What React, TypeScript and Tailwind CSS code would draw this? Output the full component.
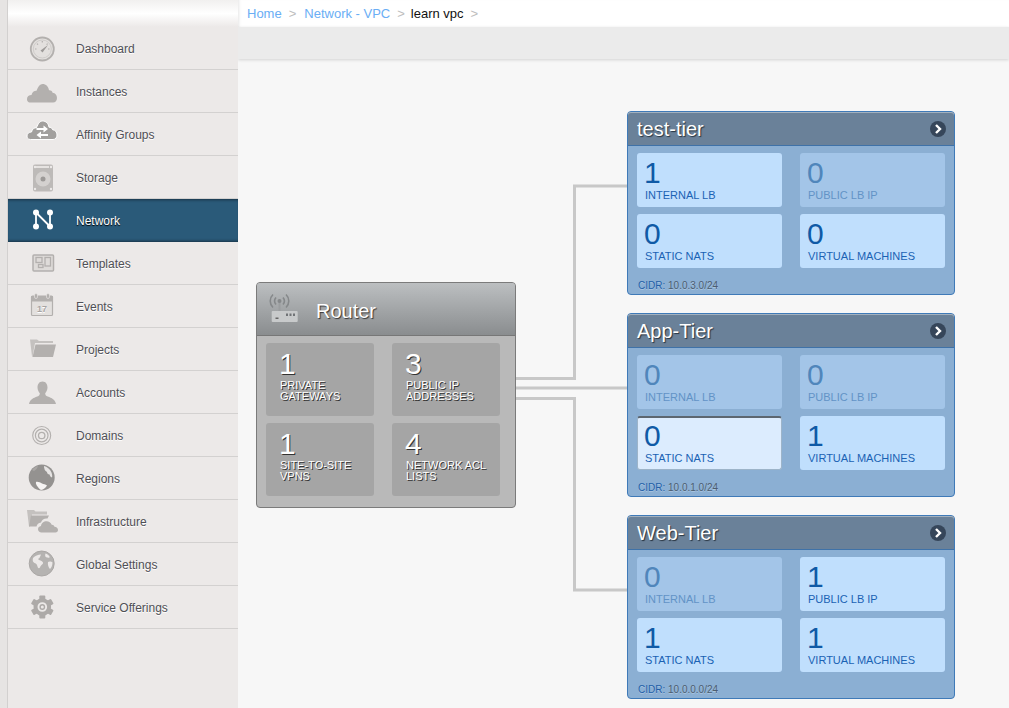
import type { ReactNode } from "react";

const G = "#b3b0ae";

function Svg({ children }: { children: ReactNode }) {
  return (
    <svg viewBox="0 0 36 36" className="h-9 w-9 shrink-0">
      {children}
    </svg>
  );
}

function DashboardIcon() {
  return (
    <Svg>
      <circle cx="18.3" cy="18" r="11.5" fill="#e3e0de" stroke={G} strokeWidth="1.8" />
      <circle cx="18.3" cy="18" r="9" fill="none" stroke="#cfccca" strokeWidth="1" />
      <path d="M18.3 10v1.5M11 18h1.5M24 18h1.5M13 12.7l1 1M23.6 12.7l-1 1" stroke={G} strokeWidth="1.2" />
      <path d="M16.5 19.5L24 14l-5.5 7.5z" fill="#9d9a98" />
    </Svg>
  );
}

const cloud =
  "M6.5 28.5C3.5 28.5 3 26.5 3 25c0-2.5 2-4 4.5-4 .5-3 3-4.5 5-4.3C14 12.5 16 10 18.5 10c3.5 0 6 2.5 6.5 6.3 1-.3 3 .2 3.6 2.4 2.8.4 4.4 2.5 4.4 5.3 0 2.5-1.5 4.5-4 4.5z";

function CloudIcon() {
  return (
    <Svg>
      <path d={cloud} fill={G} />
    </Svg>
  );
}

function AffinityIcon() {
  return (
    <Svg>
      <path d={cloud} transform="translate(0 -6)" fill="#a2a09e" stroke="#fff" strokeWidth="1" />
      <path d="M12.5 11h7V8.5l4.5 3.5-4.500 3.500V13h-7zM24 17h-7v-2.500L12.500 18l4.500 3.500V19h7z" fill="#fff" />
    </Svg>
  );
}

function StorageIcon() {
  return (
    <Svg>
      <rect x="9" y="4.5" width="20" height="27" rx="2" fill="#bdbab8" />
      <rect x="12" y="6" width="13" height="2" fill="#e6e3e1" />
      <circle cx="19" cy="19" r="7.5" fill="#d4d1cf" />
      <circle cx="19" cy="19" r="2.5" fill="#9c9997" />
      <circle cx="11" cy="29" r="1.2" fill="#ece9e8" />
      <circle cx="27" cy="29" r="1.2" fill="#ece9e8" />
      <circle cx="27" cy="7" r="1.2" fill="#ece9e8" />
      <circle cx="11" cy="7" r="1.2" fill="#ece9e8" />
    </Svg>
  );
}

function NetworkIcon() {
  return (
    <Svg>
      <path d="M12 9.5v14M12 9.5l14 14M26 9.5v14" stroke="#fff" strokeWidth="1.8" fill="none" />
      <circle cx="12" cy="9.5" r="3" fill="#fff" />
      <circle cx="26" cy="9.5" r="3" fill="#fff" />
      <circle cx="12" cy="23.5" r="3" fill="#fff" />
      <circle cx="26" cy="23.5" r="3" fill="#fff" />
    </Svg>
  );
}

function TemplatesIcon() {
  return (
    <Svg>
      <rect x="9" y="9" width="20.5" height="16" rx="1" fill="#dedbd9" stroke={G} strokeWidth="1.5" />
      <rect x="12" y="11.5" width="6" height="5" fill="none" stroke={G} strokeWidth="1.3" />
      <rect x="21" y="11.5" width="5.5" height="8.5" fill="none" stroke={G} strokeWidth="1.3" />
      <rect x="14.5" y="18.5" width="4.5" height="3" fill="none" stroke={G} strokeWidth="1.3" />
    </Svg>
  );
}

function EventsIcon() {
  return (
    <Svg>
      <rect x="7.5" y="7" width="21" height="19.5" rx="1" fill="#e3e0de" stroke={G} strokeWidth="1.2" />
      <rect x="7" y="7" width="22" height="5.5" fill={G} />
      <rect x="10.5" y="4.5" width="3" height="5" rx="1.5" fill={G} stroke="#ece9e8" strokeWidth="0.6" />
      <rect x="22.5" y="4.5" width="3" height="5" rx="1.5" fill={G} stroke="#ece9e8" strokeWidth="0.6" />
      <text x="18" y="23" textAnchor="middle" fontSize="9" fontWeight="700" fill="#a8a5a3" fontFamily="Liberation Sans, sans-serif">
        17
      </text>
    </Svg>
  );
}

function ProjectsIcon() {
  return (
    <Svg>
      <path d="M6 7.5h7l2 1.5h14v2H11L8.500 24.500H8z" fill="#c4c1bf" />
      <path d="M11.5 12.5H32l-3 12.500H8.500z" fill={G} />
    </Svg>
  );
}

function AccountsIcon() {
  return (
    <Svg>
      <path
        d="M19.5 6.5c3.500 0 5 3 5 6 0 2.500-1.200 4.500-2.300 5.800 0 1.700.6 2.500 2.500 3.200 4 1.500 7.500 3 8.300 7.500H6c.8-4.500 4.300-6 8.300-7.500 1.900-.7 2.500-1.500 2.500-3.200-1.100-1.300-2.300-3.300-2.300-5.800 0-3 1.500-6 5-6z"
        fill={G}
        transform="translate(-1 0)"
      />
    </Svg>
  );
}

function DomainsIcon() {
  return (
    <Svg>
      <circle cx="17.7" cy="17.5" r="9" fill="none" stroke={G} strokeWidth="1.1" />
      <circle cx="17.7" cy="17.5" r="6.3" fill="none" stroke={G} strokeWidth="1.2" />
      <circle cx="17.7" cy="17.5" r="3.2" fill="none" stroke={G} strokeWidth="1.3" />
    </Svg>
  );
}

function RegionsIcon() {
  return (
    <Svg>
      <circle cx="17.7" cy="16.5" r="13" fill="#949290" />
      <path d="M20 5c3 .5 6 3 7.500 6.500.5 1.500 1 3.500.5 5-1.500-.5-2-1.500-2.500-3-1.500 0-2.500-1-2.500-2.500-1.500-1-2.500-2-2.500-3-.5-1-.5-2-.5-3z" fill="#e6e4e3" />
      <path d="M12 21c2-.5 4 .5 6 1.500 1.500.5 3.500 1 5 2-1.500 2.500-3.500 4-6 4.500-1.500-1-2.500-2-3.500-3.500-1-1.500-2-3-1.500-4.500z" fill="#f6f4f3" />
      <path d="M8 9c1.500-2 4-3.500 6-4-.5 2-2 4-4 5z" fill="#a9a6a4" />
    </Svg>
  );
}

function InfrastructureIcon() {
  return (
    <Svg>
      <path d="M3 6h7l1.500 1.500H23v3H8l-2 12H5z" fill="#c4c1bf" />
      <path d="M7 11.5h18l-1.500 3c-3-.5-5.500 1-6.500 4-2.500.3-4 1.800-4.500 4H5z" fill={G} />
      <path
        d="M17.5 28.5c-2 0-3.500-1.300-3.500-3.200 0-1.800 1.200-3 3-3.300.3-2.800 2.800-4.800 5.500-4.800 2.500 0 4.300 1.300 5.200 3.500 1-.2 2.500.5 2.800 2 2 .3 3.500 1.300 3.500 3.300 0 1.400-1 2.500-2.500 2.500z"
        fill={G}
      />
    </Svg>
  );
}

function GlobalIcon() {
  return (
    <Svg>
      <circle cx="17.7" cy="16.5" r="12.5" fill="#b5b3b1" stroke="#aaa7a5" strokeWidth="1" />
      <path d="M9 11c2-2 5-3.500 8-3.500-1 2-1 3.500-3 4.500 1 1.500 4 1.500 5 3.500.5 2-2.500 2.500-3 5-1 1-2 1-2.500-1-.5-2-1-3-3-3.500-2-1-2-3-1.500-5z" fill="#ece9e8" />
      <path d="M21.5 6.500c2 .5 3 1.500 4 3 .5 1.500-1 1.500-2 1-1.500 0-3-1-2-4z" fill="#ece9e8" />
      <path d="M24 15c1.500-1 3.500-.5 4.500.5 0 2.500-1 5-2.500 6.500-1.500-1.500-2.500-4.500-2-7z" fill="#ece9e8" />
    </Svg>
  );
}

function GearIcon() {
  return (
    <Svg>
      <g transform="translate(18.3 17)">
        {[0, 60, 120, 180, 240, 300].map((a) => (
          <rect key={a} x="-3" y="-11.5" width="6" height="6" rx="1" fill="#adaaa8" transform={`rotate(${a})`} />
        ))}
        <circle r="6.8" fill="none" stroke="#adaaa8" strokeWidth="4" />
        <circle r="2.2" fill="none" stroke="#adaaa8" strokeWidth="1.4" />
      </g>
    </Svg>
  );
}

const navItems = [
  { label: "Dashboard", icon: <DashboardIcon /> },
  { label: "Instances", icon: <CloudIcon /> },
  { label: "Affinity Groups", icon: <AffinityIcon /> },
  { label: "Storage", icon: <StorageIcon /> },
  { label: "Network", icon: <NetworkIcon />, active: true },
  { label: "Templates", icon: <TemplatesIcon /> },
  { label: "Events", icon: <EventsIcon /> },
  { label: "Projects", icon: <ProjectsIcon /> },
  { label: "Accounts", icon: <AccountsIcon /> },
  { label: "Domains", icon: <DomainsIcon /> },
  { label: "Regions", icon: <RegionsIcon /> },
  { label: "Infrastructure", icon: <InfrastructureIcon /> },
  { label: "Global Settings", icon: <GlobalIcon /> },
  { label: "Service Offerings", icon: <GearIcon /> },
];

function Sidebar() {
  return (
    <aside className="z-10 w-[238px] shrink-0 bg-[#e6e4e3] pl-[7px]">
      <div className="h-full border-l border-[#d2d0cf] bg-[#ece9e8]">
        <div className="h-[27px] bg-gradient-to-b from-[#f1f0ef] via-[#ffffff] to-[#ece9e8]" />
        {navItems.map((item) =>
          item.active ? (
            <div
              key={item.label}
              className="flex h-[43px] items-center gap-4 bg-[#2a5a79] pl-4 text-xs text-white shadow-[inset_0_3px_3px_-2px_rgba(0,0,0,0.45),inset_0_-3px_3px_-2px_rgba(0,0,0,0.45)] [text-shadow:0_1px_1px_#000]"
            >
              {item.icon}
              <span>{item.label}</span>
            </div>
          ) : (
            <div
              key={item.label}
              className="flex h-[43px] items-center gap-4 border-b border-[#d3d1d0] pl-4 pt-px text-xs text-[#4f4f55] [text-shadow:0_1px_0_#fff]"
            >
              {item.icon}
              <span>{item.label}</span>
            </div>
          ),
        )}
      </div>
    </aside>
  );
}

function Breadcrumb() {
  return (
    <div className="flex h-[27px] items-center bg-white pl-[9px] text-[13px] shadow-[inset_3px_0_3px_-2px_rgba(0,0,0,0.1)]">
      <span className="mr-[7px] text-[#6aaef5]">Home</span>
      <span className="mr-2 text-[#bdbdbd]">&gt;</span>
      <span className="mr-[7px] text-[#6aaef5]">Network - VPC</span>
      <span className="mr-1.5 text-[#bdbdbd]">&gt;</span>
      <span className="mr-[7px] text-[#111]">learn vpc</span>
      <span className="text-[#bdbdbd]">&gt;</span>
    </div>
  );
}

function RouterIcon() {
  return (
    <svg viewBox="0 0 30 34" className="h-[34px] w-[30px] shrink-0">
      <path d="M11.5 9v10" stroke="#9a9d9f" strokeWidth="2" />
      <path d="M5 15.5a9 9 0 0 1 0-13M18 15.5a9 9 0 0 0 0-13M8 12.5a5.5 5.5 0 0 1 0-7M15 12.5a5.5 5.5 0 0 0 0-7" fill="none" stroke="#85888a" strokeWidth="1.6" />
      <circle cx="11.5" cy="9" r="2" fill="#85888a" />
      <rect x="3.7" y="19" width="26" height="11" rx="1" fill="#c8cacb" />
      <rect x="7.5" y="25.5" width="3" height="1.5" fill="#666" />
      <path d="M18 21.5h2V24h-2zM21.5 21.5h2V24h-2zM25 21.5h2V24h-2z" fill="#707376" />
    </svg>
  );
}

function RouterStat({ n, lines }: { n: number; lines: [string, string] }) {
  return (
    <div className="h-[73px] rounded-[3px] bg-[#a5a5a5] pl-[13px] pt-[6px] text-white [text-shadow:1px_1px_0_#333]">
      <div className="text-[30px] leading-[30px]">{n}</div>
      <div className="mt-px pl-px text-[11px] leading-[11px]">
        {lines[0]}
        <br />
        {lines[1]}
      </div>
    </div>
  );
}

function Router() {
  return (
    <div className="h-[226px] w-[260px] shrink-0 rounded-[4px] border border-[#7b7b7b] bg-[#b9b9b9]">
      <div className="flex h-[53px] items-center gap-[18px] rounded-t-[3px] border-b border-[#777] bg-gradient-to-b from-[#bcbfc1] to-[#8a8d8f] pl-[11px] text-xl text-white [text-shadow:1px_1px_1px_#333]">
        <RouterIcon />
        <span className="pt-1">Router</span>
      </div>
      <div className="grid grid-cols-[108px_108px] gap-x-[18px] gap-y-[7px] pl-[9px] pt-[7px]">
        <RouterStat n={1} lines={["PRIVATE", "GATEWAYS"]} />
        <RouterStat n={3} lines={["PUBLIC IP", "ADDRESSES"]} />
        <RouterStat n={1} lines={["SITE-TO-SITE", "VPNS"]} />
        <RouterStat n={4} lines={["NETWORK ACL", "LISTS"]} />
      </div>
    </div>
  );
}

type Stat = { n: number; label: string; off?: boolean; hot?: boolean };

function TierStat({ n, label, off, hot }: Stat) {
  if (off) {
    return (
      <div className="h-[54px] rounded-[3px] bg-[#a3c5e8] pl-[7px] pt-[5px] text-[#5086bb]">
        <div className="text-[30px] leading-[30px]">{n}</div>
        <div className="pl-px text-[11px] leading-[15px] text-[#6293c6]">{label}</div>
      </div>
    );
  }
  return (
    <div
      className={
        hot
          ? "h-[54px] rounded-[3px] border-t-2 border-x border-b border-t-[#5c6670] border-x-[#9db4c9] border-b-[#9db4c9] bg-[#dcecfe] pl-[6px] pt-[3px] text-[#0f5aa6]"
          : "h-[54px] rounded-[3px] bg-[#c0dffd] pl-[7px] pt-[5px] text-[#0f5aa6]"
      }
    >
      <div className="text-[30px] leading-[30px]">{n}</div>
      <div className="pl-px text-[11px] leading-[15px] text-[#1a62b4]">{label}</div>
    </div>
  );
}

function Tier({ name, cidr, stats }: { name: string; cidr: string; stats: Stat[] }) {
  return (
    <div className="h-[184px] w-[328px] rounded-[4px] border border-[#3f7ab8] bg-[#8bafd3]">
      <div className="flex h-[34px] items-center justify-between rounded-t-[3px] border-b border-[#3f72a8] bg-[#6a8199] pl-[9px] pr-[8px] text-xl text-white shadow-[inset_0_1px_0_#a3b1bf] [text-shadow:1px_1px_1px_#26323e]">
        <span>{name}</span>
        <span className="flex h-4 w-4 items-center justify-center rounded-full bg-[#36465a]">
          <svg viewBox="0 0 16 16" className="h-4 w-4">
            <path d="M6 4l4 4-4 4" fill="none" stroke="#fff" strokeWidth="2.4" />
          </svg>
        </span>
      </div>
      <div className="grid grid-cols-[145px_145px] gap-x-[18px] gap-y-[7px] pl-[9px] pt-[7px]">
        {stats.map((s) => (
          <TierStat key={s.label} {...s} />
        ))}
      </div>
      <div className="pl-[10px] pt-[12px] text-[10px] leading-3 text-[#4c5d70] [text-shadow:0_1px_0_#a9c4df]">
        <span className="text-[#1f5fa8]">CIDR:</span> {cidr}
      </div>
    </div>
  );
}

export default function App() {
  return (
    <div className="flex h-[708px] w-full overflow-hidden bg-[#f7f7f7] font-['Liberation_Sans',Arial,sans-serif]">
      <Sidebar />
      <main className="flex min-w-0 flex-1 flex-col">
        <Breadcrumb />
        <div className="h-[32px] bg-[#ebebeb] shadow-[0_1px_3px_rgba(0,0,0,0.15)]" />
        <div className="relative flex flex-1 items-start pl-[18px]">
          {/* connector lines sit behind the diagram nodes */}
          <svg className="absolute left-0 top-0 h-full w-full" fill="none" stroke="#c8c8c8" strokeWidth="3">
            <path d="M278 319.5H336.5V127H389" />
            <path d="M278 329H389" />
            <path d="M278 339.5H336.5V531H389" />
          </svg>
          <div className="relative mt-[223px]">
            <Router />
          </div>
          <div className="relative ml-[111px] mt-[52px] flex flex-col gap-[18px]">
            <Tier
              name="test-tier"
              cidr="10.0.3.0/24"
              stats={[
                { n: 1, label: "INTERNAL LB" },
                { n: 0, label: "PUBLIC LB IP", off: true },
                { n: 0, label: "STATIC NATS" },
                { n: 0, label: "VIRTUAL MACHINES" },
              ]}
            />
            <Tier
              name="App-Tier"
              cidr="10.0.1.0/24"
              stats={[
                { n: 0, label: "INTERNAL LB", off: true },
                { n: 0, label: "PUBLIC LB IP", off: true },
                { n: 0, label: "STATIC NATS", hot: true },
                { n: 1, label: "VIRTUAL MACHINES" },
              ]}
            />
            <Tier
              name="Web-Tier"
              cidr="10.0.0.0/24"
              stats={[
                { n: 0, label: "INTERNAL LB", off: true },
                { n: 1, label: "PUBLIC LB IP" },
                { n: 1, label: "STATIC NATS" },
                { n: 1, label: "VIRTUAL MACHINES" },
              ]}
            />
          </div>
        </div>
      </main>
    </div>
  );
}
